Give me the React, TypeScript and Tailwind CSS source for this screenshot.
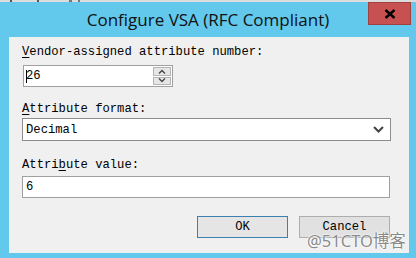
import React from "react";

const mono = "font-['Liberation_Mono','DejaVu_Sans_Mono',monospace] text-[12.2px] leading-[14px] text-black";

function Label({ pre, acc, post }: { pre: string; acc: string; post: string }) {
  return (
    <div className={mono}>
      {pre}
      <span className="underline underline-offset-[2px]">{acc}</span>
      {post}
    </div>
  );
}

function Chevron({ up }: { up?: boolean }) {
  return (
    <svg width="8" height="5" viewBox="0 0 8 5" className="block">
      <path
        d={up ? "M1 4.5 L4 1.5 L7 4.5" : "M1 0.5 L4 3.5 L7 0.5"}
        fill="none"
        stroke="#444"
        strokeWidth="1.3"
      />
    </svg>
  );
}

export default function App() {
  return (
    <div className="w-[416px] h-[258px] bg-[#62c8ec] flex flex-col overflow-hidden relative">
      {/* edge of window behind */}
      <div className="h-[2px] bg-[#dcdcdc] flex">
        <div className="w-[10px]" />
        <div className="w-[2px] bg-[#555]" />
        <div className="w-[25px]" />
        <div className="w-[2px] bg-[#555]" />
        <div className="w-[30px]" />
        <div className="w-[3px] bg-[#777]" />
        <div className="w-[6px]" />
        <div className="w-[2px] bg-[#777]" />
      </div>

      {/* title bar */}
      <div className="h-[35px] grid grid-cols-[1fr_auto_1fr]">
        <div />
        <div className="pt-[6px] font-['Open_Sans','Noto_Sans',sans-serif] text-[17px] leading-[24px] text-[#111]">
          Configure VSA (RFC Compliant)
        </div>
        <div className="flex justify-end pr-[5px]">
          <div className="w-[43px] h-[23px] bg-[#c75050] border border-[#a04040] flex items-center justify-center">
            <svg width="12" height="10" viewBox="0 0 12 10">
              <path d="M1.5 1 L10.5 9 M10.5 1 L1.5 9" stroke="#000" strokeWidth="2.4" />
            </svg>
          </div>
        </div>
      </div>

      {/* client area */}
      <div className="ml-[9px] w-[400px] h-[216px] bg-[#f0f0f0] pl-[13px] pt-[8px]">
        <Label pre="" acc="V" post="endor-assigned attribute number:" />

        <div className="mt-[6px] ml-[1px] w-[150px] h-[22px] bg-white border border-[#a0a0a0] flex">
          <div className={`${mono} flex-1 flex items-center pl-[2px]`}>
            <span className="w-px h-[13px] bg-black -mr-[1px]" />
            26
          </div>
          <div className="w-[20px] flex flex-col gap-px p-px">
            <div className="flex-1 bg-[#e6e6e6] border border-[#b5b5b5] flex items-center justify-center">
              <Chevron up />
            </div>
            <div className="flex-1 bg-[#e6e6e6] border border-[#b5b5b5] flex items-center justify-center">
              <Chevron />
            </div>
          </div>
        </div>

        <div className="mt-[15px]">
          <Label pre="" acc="A" post="ttribute format:" />
        </div>

        <div className="mt-[2px] w-[369px] h-[23px] bg-white border border-[#8c8c8c] flex items-center justify-between pl-[3px] pr-[6px]">
          <span className={mono}>Decimal</span>
          <svg width="11" height="7" viewBox="0 0 11 7">
            <path d="M1 1 L5.5 5.5 L10 1" fill="none" stroke="#444" strokeWidth="2" />
          </svg>
        </div>

        <div className="mt-[17px]">
          <Label pre="Attri" acc="b" post="ute value:" />
        </div>

        <div className="mt-[4px] w-[368px] h-[22px] bg-white border border-[#a0a0a0] flex items-center pl-[3px]">
          <span className={mono}>6</span>
        </div>

        <div className="mt-[18px] flex gap-[11px] pl-[175px]">
          <div className="w-[91px] h-[22px] bg-[#e5e5e5] border border-[#3c7fb1] flex items-center justify-center">
            <span className={mono}>OK</span>
          </div>
          <div className="w-[91px] h-[22px] bg-[#e1e1e1] border border-[#adadad] flex items-center justify-center">
            <span className={mono}>Cancel</span>
          </div>
        </div>
      </div>

      {/* watermark */}
      <div className="absolute left-[307px] top-[231px] font-['Noto_Sans','Noto_Sans_CJK_SC',sans-serif] text-[16.5px] leading-[20px] text-[#8a8a8a] [text-shadow:0_0_2px_#fff,0_0_2px_#fff,0_0_1px_#fff]">
        @51CTO博客
      </div>
    </div>
  );
}
